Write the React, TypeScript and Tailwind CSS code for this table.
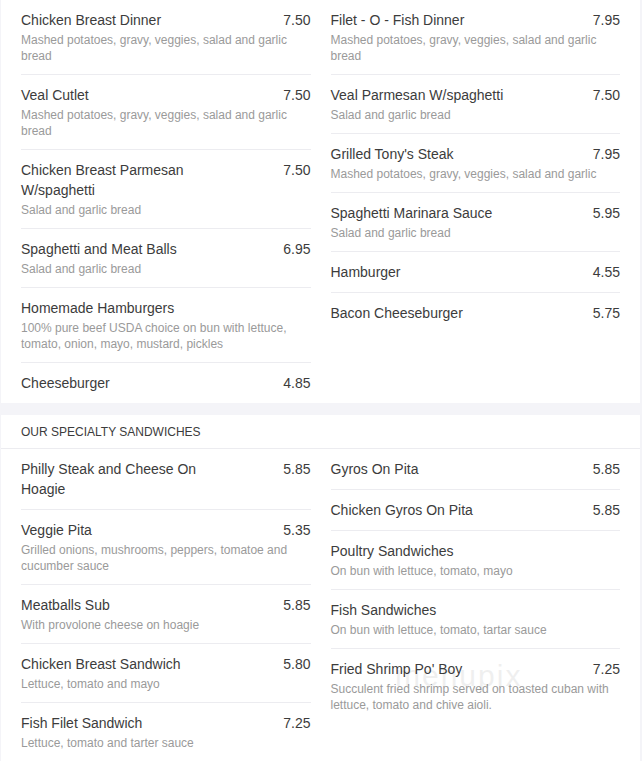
type Item = { name: string; price?: string; desc?: string };

const DINNERS_LEFT: Item[] = [
  { name: "Chicken Breast Dinner", price: "7.50", desc: "Mashed potatoes, gravy, veggies, salad and garlic bread" },
  { name: "Veal Cutlet", price: "7.50", desc: "Mashed potatoes, gravy, veggies, salad and garlic bread" },
  { name: "Chicken Breast Parmesan W/spaghetti", price: "7.50", desc: "Salad and garlic bread" },
  { name: "Spaghetti and Meat Balls", price: "6.95", desc: "Salad and garlic bread" },
  { name: "Homemade Hamburgers", desc: "100% pure beef USDA choice on bun with lettuce, tomato, onion, mayo, mustard, pickles" },
  { name: "Cheeseburger", price: "4.85" },
];

const DINNERS_RIGHT: Item[] = [
  { name: "Filet - O - Fish Dinner", price: "7.95", desc: "Mashed potatoes, gravy, veggies, salad and garlic bread" },
  { name: "Veal Parmesan W/spaghetti", price: "7.50", desc: "Salad and garlic bread" },
  { name: "Grilled Tony's Steak", price: "7.95", desc: "Mashed potatoes, gravy, veggies, salad and garlic" },
  { name: "Spaghetti Marinara Sauce", price: "5.95", desc: "Salad and garlic bread" },
  { name: "Hamburger", price: "4.55" },
  { name: "Bacon Cheeseburger", price: "5.75" },
];

const SANDWICHES_LEFT: Item[] = [
  { name: "Philly Steak and Cheese On Hoagie", price: "5.85" },
  { name: "Veggie Pita", price: "5.35", desc: "Grilled onions, mushrooms, peppers, tomatoe and cucumber sauce" },
  { name: "Meatballs Sub", price: "5.85", desc: "With provolone cheese on hoagie" },
  { name: "Chicken Breast Sandwich", price: "5.80", desc: "Lettuce, tomato and mayo" },
  { name: "Fish Filet Sandwich", price: "7.25", desc: "Lettuce, tomato and tarter sauce" },
];

const SANDWICHES_RIGHT: Item[] = [
  { name: "Gyros On Pita", price: "5.85" },
  { name: "Chicken Gyros On Pita", price: "5.85" },
  { name: "Poultry Sandwiches", desc: "On bun with lettuce, tomato, mayo" },
  { name: "Fish Sandwiches", desc: "On bun with lettuce, tomato, tartar sauce" },
  { name: "Fried Shrimp Po' Boy", price: "7.25", desc: "Succulent fried shrimp served on toasted cuban with lettuce, tomato and chive aioli." },
];

function MenuColumn({ items }: { items: Item[] }) {
  return (
    <div className="flex flex-col">
      {items.map((item, idx) => (
        <div
          key={item.name}
          className={`py-[10px] ${idx < items.length - 1 ? "border-b border-[#ececf0]" : ""}`}
        >
          <div className="flex justify-between items-start">
            <span className="w-[210px] text-[14px] leading-[20px] text-[#3c3c3c]">{item.name}</span>
            {item.price && (
              <span className="text-[14px] leading-[20px] text-[#3c3c3c]">{item.price}</span>
            )}
          </div>
          {item.desc && (
            <p className="mt-[2px] text-[12px] leading-[16px] text-[#9a9a9a]">{item.desc}</p>
          )}
        </div>
      ))}
    </div>
  );
}

export default function App() {
  return (
    <div
      className="relative min-h-[761px] bg-[#f4f4f8] pl-[1px] pr-[2px] overflow-hidden"
      style={{ fontFamily: '"Liberation Sans", Arial, sans-serif' }}
    >
      {/* Dinners */}
      <div className="bg-white px-[20px]">
        <div className="grid grid-cols-2 gap-x-[20px]">
          <MenuColumn items={DINNERS_LEFT} />
          <MenuColumn items={DINNERS_RIGHT} />
        </div>
      </div>

      <div className="h-[12px]" />

      {/* Specialty sandwiches */}
      <div className="bg-white">
        <div className="px-[20px] pt-[9px] pb-[8px] border-b border-[#ececf0] text-[12px] leading-[16px] text-[#3c3c3c] uppercase">
          Our Specialty Sandwiches
        </div>
        <div className="px-[20px] grid grid-cols-2 gap-x-[20px]">
          <MenuColumn items={SANDWICHES_LEFT} />
          <MenuColumn items={SANDWICHES_RIGHT} />
        </div>
      </div>

      {/* watermark */}
      <div className="absolute left-[395px] top-[661px] text-[30px] leading-[30px] tracking-[2px] text-[#000] opacity-[0.06] select-none pointer-events-none">
        menupix
      </div>
    </div>
  );
}
